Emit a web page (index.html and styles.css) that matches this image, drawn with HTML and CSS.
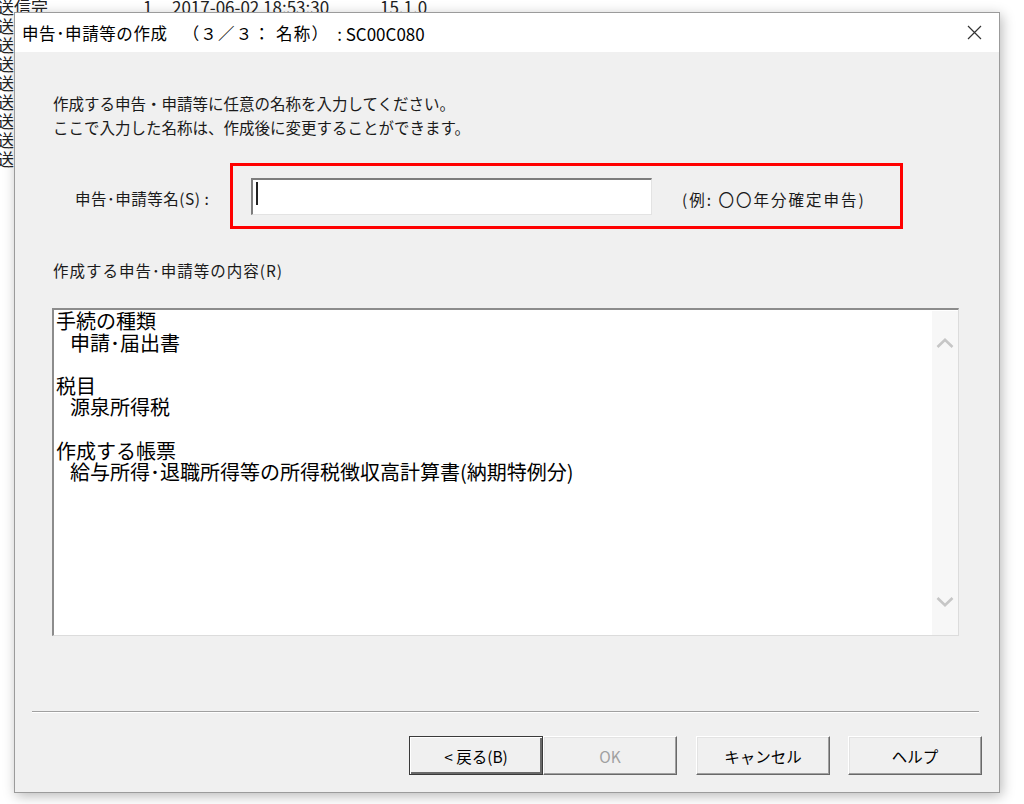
FILE: index.html
```html
<!DOCTYPE html>
<html lang="ja">
<head>
<meta charset="utf-8">
<title>申告・申請等の作成</title>
<link rel="stylesheet" href="styles.css">
</head>
<body>
<div class="desktop">
  <div class="bg-list">
    <div class="bg-row first"><span class="c1">送信完</span><span class="c2">1</span><span class="c3">2017-06-02 18:53:30</span><span class="c4">15.1.0</span></div>
    <div class="bg-row">送</div>
    <div class="bg-row">送</div>
    <div class="bg-row">送</div>
    <div class="bg-row">送</div>
    <div class="bg-row">送</div>
    <div class="bg-row">送</div>
    <div class="bg-row">送</div>
    <div class="bg-row">送</div>
  </div>

  <div class="dialog">
    <div class="titlebar">
      <span class="title"><span class="t1">申告･申請等の作成</span><span class="t2">（３／３： 名称）</span><span class="t3">: SC00C080</span></span>
      <svg class="close" width="15" height="15" viewBox="0 0 15 15"><path d="M1 1L14 14M14 1L1 14" stroke="#333" stroke-width="1.2" fill="none"/></svg>
    </div>
    <div class="body">
      <div class="content">
        <p class="intro">作成する申告・申請等に任意の名称を入力してください。<br>ここで入力した名称は、作成後に変更することができます。</p>
        <div class="name-row">
          <label class="name-label">申告･申請等名(S) :</label>
          <div class="highlight">
            <div class="input"><span class="caret"></span></div>
            <span class="example">(例: 〇〇年分確定申告)</span>
          </div>
        </div>
        <div class="section-label">作成する申告･申請等の内容(R)</div>
        <div class="listbox">
          <div class="list-text">
            <div class="ln">手続の種類</div>
            <div class="ln sub">申請･届出書</div>
            <div class="ln blank"></div>
            <div class="ln">税目</div>
            <div class="ln sub">源泉所得税</div>
            <div class="ln blank"></div>
            <div class="ln">作成する帳票</div>
            <div class="ln sub">給与所得･退職所得等の所得税徴収高計算書(納期特例分)</div>
          </div>
          <div class="scrollbar">
            <svg width="18" height="10" viewBox="0 0 18 10"><polyline points="1.5,9 9,1.8 16.5,9" fill="none" stroke="#c6c6c6" stroke-width="2.6"/></svg>
            <svg width="18" height="10" viewBox="0 0 18 10"><polyline points="1.5,1 9,8.2 16.5,1" fill="none" stroke="#c6c6c6" stroke-width="2.6"/></svg>
          </div>
        </div>
      </div>
      <div class="footer">
        <div class="separator"></div>
        <div class="buttons">
          <button class="btn default">&lt; 戻る(B)</button>
          <button class="btn disabled">OK</button>
          <button class="btn gap1">キャンセル</button>
          <button class="btn gap2">ヘルプ</button>
        </div>
      </div>
    </div>
  </div>
</div>
</body>
</html>
```

FILE: styles.css
```css
body {
  margin: 0;
}

.desktop {
  position: relative;
  width: 1024px;
  height: 804px;
  background: #fff;
  overflow: hidden;
  font-family: "Noto Sans CJK JP", "Noto Sans", sans-serif;
  color: #000;
}

.bg-list {
  margin-top: -3px;
  margin-left: -3px;
  font-size: 17px;
  line-height: 19px;
  color: #222;
}

.bg-row.first {
  display: flex;
  white-space: nowrap;
}

.c1 { width: 146px; }
.c2 { width: 29px; }
.c3 { width: 208px; }

.dialog {
  position: absolute;
  left: 14px;
  top: 12px;
  width: 986px;
  height: 781px;
  box-sizing: border-box;
  border: 1px solid #9b9b9b;
  background: #f0f0f0;
  box-shadow: 2px 3px 12px rgba(0, 0, 0, 0.28);
  display: flex;
  flex-direction: column;
}

.titlebar {
  height: 39px;
  flex: none;
  background: #fff;
  display: flex;
  align-items: center;
  justify-content: space-between;
  padding: 0 17px 0 7px;
  font-size: 16.5px;
  white-space: nowrap;
}

.title {
  margin-top: 1px;
  display: flex;
}

.t1 {
  letter-spacing: 0.6px;
}

.t2 {
  margin-left: 15px;
  letter-spacing: 1.2px;
}

.t3 {
  margin-left: 8px;
  font-size: 17px;
}

.close {
  display: block;
}

.body {
  flex: 1;
  display: flex;
  flex-direction: column;
}

.content {
  padding: 39px 0 0 38px;
}

.intro {
  margin: 0;
  font-size: 15.5px;
  line-height: 24px;
  color: #1a1a1a;
  white-space: nowrap;
}

.name-row {
  margin-top: 24px;
  display: flex;
  align-items: center;
  padding-left: 22px;
}

.name-label {
  width: 155px;
  flex: none;
  font-size: 15.5px;
  letter-spacing: 0.5px;
  margin-top: 3px;
  white-space: nowrap;
  color: #1a1a1a;
}

.highlight {
  width: 673px;
  height: 66px;
  box-sizing: border-box;
  border: 3px solid #ff0000;
  display: flex;
  align-items: center;
  padding-left: 18px;
}

.input {
  width: 401px;
  height: 37px;
  box-sizing: border-box;
  background: #fff;
  border-style: solid;
  border-width: 2px 1px 1px 2px;
  border-color: #7d7d7d #e3e3e3 #e3e3e3 #7d7d7d;
  display: flex;
  align-items: flex-start;
}

.caret {
  display: block;
  width: 2px;
  height: 23px;
  background: #222;
  margin: 2px 0 0 3px;
}

.example {
  margin-left: 30px;
  margin-top: 6px;
  font-size: 15.5px;
  letter-spacing: 2px;
  white-space: nowrap;
  color: #1a1a1a;
}

.section-label {
  margin-top: 29px;
  font-size: 15.5px;
  letter-spacing: 1px;
  line-height: 24px;
  color: #1a1a1a;
}

.listbox {
  margin-top: 26px;
  margin-left: -1px;
  width: 907px;
  height: 328px;
  box-sizing: border-box;
  border-style: solid;
  border-width: 2px 1px 1px 2px;
  border-color: #8c8c8c #dcdcdc #dcdcdc #8c8c8c;
  background: #fff;
  display: flex;
}

.list-text {
  flex: 1;
  padding-left: 2px;
  font-size: 20px;
  line-height: 21.6px;
  white-space: nowrap;
}

.ln.sub {
  padding-left: 14px;
}

.ln.blank {
  height: 21.6px;
}

.scrollbar {
  width: 26px;
  flex: none;
  margin-top: 1px;
  background: #f7f7f7;
  display: flex;
  flex-direction: column;
  justify-content: space-between;
  align-items: center;
  padding: 27px 0 28px;
  box-sizing: border-box;
}

.scrollbar svg {
  display: block;
}

.separator {
  margin: 75px 20px 0 17px;
  border-top: 1px solid #a0a0a0;
  border-bottom: 1px solid #fff;
}

.buttons {
  display: flex;
  justify-content: flex-end;
  margin: 23px 17px 0 0;
}

.btn {
  width: 134px;
  height: 39px;
  box-sizing: border-box;
  background: #f0f0f0;
  font-family: "Noto Sans CJK JP", "Noto Sans", sans-serif;
  font-size: 15.5px;
  color: #000;
  border: 1px solid;
  border-color: #fff #696969 #696969 #fff;
  box-shadow: inset -1px -1px 0 #a0a0a0, inset 1px 1px 0 #e3e3e3;
  display: flex;
  align-items: center;
  justify-content: center;
  padding: 0;
}

.btn.default {
  border: 1px solid #3a3a3a;
  box-shadow: inset 1px 1px 0 #fff, inset -2px -2px 0 #696969;
}

.btn.disabled {
  color: #a0a0a0;
}

.btn.gap1 {
  margin-left: 19px;
}

.btn.gap2 {
  margin-left: 18px;
}
```
